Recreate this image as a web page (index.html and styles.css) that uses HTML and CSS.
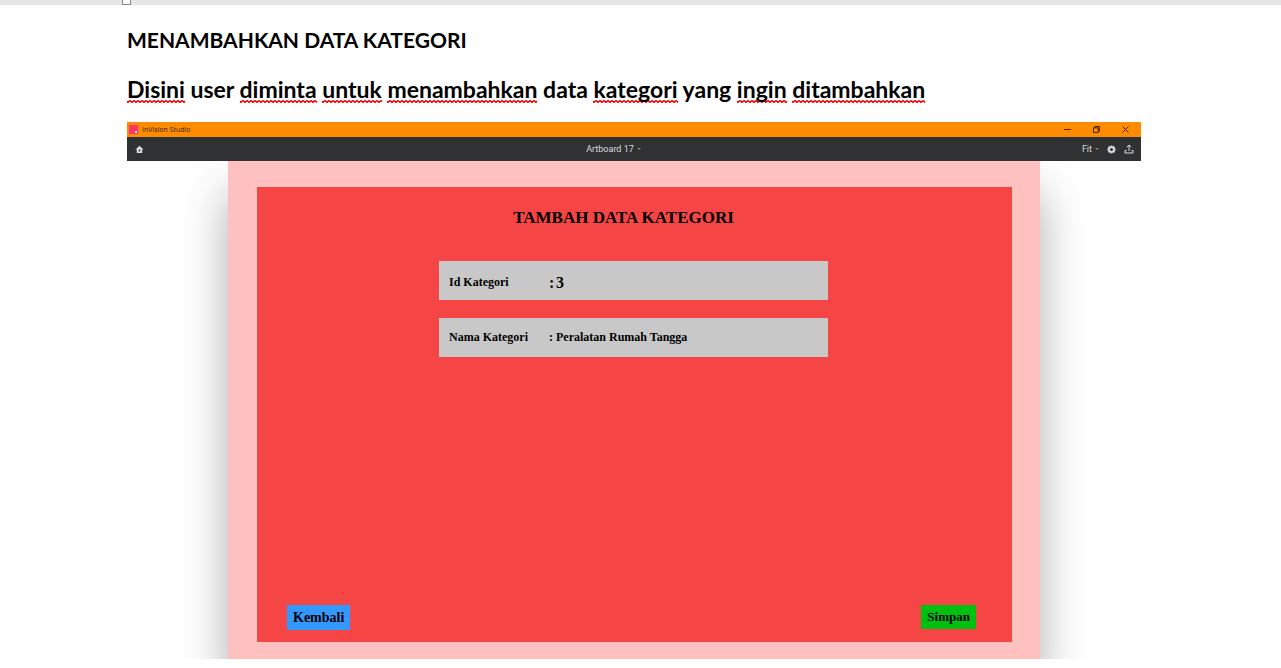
FILE: index.html
```html
<!DOCTYPE html>
<html lang="id">
<head>
<meta charset="utf-8">
<meta name="viewport" content="width=device-width, initial-scale=1">
<title>Menambahkan Data Kategori</title>
<link rel="stylesheet" href="styles.css">
</head>
<body>
<div class="ruler"><span class="ruler-mark"></span></div>
<main class="document">
  <h1 class="heading">MENAMBAHKAN DATA KATEGORI</h1>
  <p class="intro"><span class="typo">Disini</span> user <span class="typo">diminta</span> <span class="typo">untuk</span> <span class="typo">menambahkan</span> data <span class="typo">kategori</span> yang <span class="typo">ingin</span> <span class="typo">ditambahkan</span></p>

  <section class="studio">
    <header class="titlebar">
      <svg class="app-logo" viewBox="0 0 9 9" aria-hidden="true"><rect width="9" height="9" fill="#ff3366"/><rect x="6" y="6" width="2" height="2" fill="#fff"/></svg>
      <span class="app-name">InVision Studio</span>
      <div class="window-controls">
        <button class="icon-button" type="button" aria-label="Minimize"><svg viewBox="0 0 9 9"><path d="M1 4.500h7"/></svg></button>
        <button class="icon-button" type="button" aria-label="Restore"><svg viewBox="0 0 9 9"><path d="M1.500 2.800h4.700v4.700H1.500zM2.800 2.800V1.500h4.700v4.700H6.200"/></svg></button>
        <button class="icon-button" type="button" aria-label="Close"><svg viewBox="0 0 9 9"><path d="M1.500 1.500l6 6M7.500 1.500l-6 6"/></svg></button>
      </div>
    </header>
    <nav class="toolbar">
      <button class="tool home" type="button" aria-label="Home"><svg viewBox="0 0 9 9"><path fill="currentColor" fill-rule="evenodd" d="M4.500 .7L8.500 4.500H7.200V8H1.800V4.500H.5zM3.800 4.500V6.500H5.200V4.500z"/></svg></button>
      <button class="tool artboard-name" type="button">Artboard 17 <span class="caret"></span></button>
      <div class="tools">
        <button class="tool" type="button">Fit <span class="caret"></span></button>
        <button class="tool gear" type="button" aria-label="Settings"><svg viewBox="0 0 9 9"><circle cx="4.500" cy="4.500" r="2.400" fill="none" stroke="currentColor" stroke-width="1.800"/><path fill="none" stroke="currentColor" stroke-width="1.800" d="M4.500 .4v1.300M4.500 7.300v1.300M.4 4.500h1.300M7.300 4.500h1.300M1.600 1.600l.9.9M6.500 6.500l.9.9M7.400 1.600l-.9.9M2.500 6.500l-.9.9"/></svg></button>
        <button class="tool share" type="button" aria-label="Share"><svg viewBox="0 0 10 10"><path fill="none" stroke="currentColor" d="M5 7V1.200M2.800 3.200L5 1l2.200 2.200M2.500 6.500H1v2.500h8V6.500H7.500"/></svg></button>
      </div>
    </nav>
    <div class="canvas">
      <div class="artboard">
        <form class="panel">
          <h2 class="panel-title">TAMBAH DATA KATEGORI</h2>
          <div class="fields">
            <div class="field field-id"><label for="id-kategori">Id Kategori</label><span class="colon">:</span><input id="id-kategori" type="text" value="3"></div>
            <div class="field"><label for="nama-kategori">Nama Kategori</label><span class="colon">:</span><input id="nama-kategori" type="text" value="Peralatan Rumah Tangga"></div>
          </div>
          <div class="actions">
            <button class="action back" type="button">Kembali</button>
            <button class="action save" type="button">Simpan</button>
          </div>
        </form>
      </div>
    </div>
  </section>
</main>
</body>
</html>
```
FILE: styles.css
```css
* { box-sizing: border-box; }
body { margin: 0; background: #fff; color: #000; }
button, input { font: inherit; color: inherit; border: 0; padding: 0; margin: 0; background: none; }

.ruler { display: flex; height: 5px; padding-left: 122px; background: #e6e6e6; }
.ruler-mark { width: 9px; height: 5px; background: #fff; border: 1px solid #888; border-top: 0; }

.document { padding: 20px 140px 9px 127px; font-family: Lato, sans-serif; }
.heading, .intro { margin: 0 0 19px; font-size: 21px; line-height: 30px; font-weight: 700; }
.intro { margin-bottom: 18px; font-size: 23px; }
.typo { background: url("data:image/svg+xml,%3Csvg xmlns='http://www.w3.org/2000/svg' width='4' height='3'%3E%3Cpath d='M-1 .5L1 2.500L3 .5L5 2.500' fill='none' stroke='%23f00' stroke-width='1.400'/%3E%3C/svg%3E") left bottom repeat-x; }

.titlebar { display: flex; align-items: center; height: 15px; padding: 0 11px 0 2px; background: #ff8c00; color: #331a00; font: 7px/15px "Open Sans", sans-serif; }
.app-logo { width: 9px; height: 9px; margin-right: 4px; }
.window-controls { display: flex; gap: 20px; margin-left: auto; }
.icon-button { display: flex; width: 9px; height: 9px; }
.icon-button svg { width: 9px; height: 9px; fill: none; stroke: #4a2500; stroke-width: 1; }

.toolbar { display: grid; grid-template-columns: 1fr auto 1fr; align-items: center; height: 24px; padding: 0 7px 0 8px; background: #2f3133; color: #dcdcdc; font: 9px/24px Roboto, sans-serif; }
.tool { display: flex; align-items: center; gap: 3px; }
.tool svg { width: 9px; height: 9px; }
.artboard-name { margin-right: 42px; }
.tools { display: flex; justify-content: flex-end; gap: 8px; }
.tool.share svg { width: 10px; height: 10px; }
.caret { border: 2px solid transparent; border-top-color: #888; border-bottom: 0; }

.canvas { padding: 0 101px; overflow: hidden; }
.artboard { padding: 26px 28px 17px 29px; background: #ffc0c0; box-shadow: 0 32px 44px rgba(0, 0, 0, 0.32); }
.panel { display: flex; flex-direction: column; min-height: 455px; background: #f64545; font-family: "Liberation Serif", serif; font-weight: 700; }
.panel-title { margin: 19px 22px 31px 0; font-size: 17px; line-height: 24px; text-align: center; }
.fields { display: grid; gap: 18px; margin: 0 184px 0 182px; }
.field { display: flex; align-items: center; height: 39px; padding: 0 10px; background: #c8c8c8; font-size: 12px; }
.field label { width: 100px; }
.colon { width: 7px; }
.field input { flex: 1; min-width: 0; }
.field-id { padding-top: 4px; }
.field-id .colon, .field-id input { font-size: 16px; }
.actions { display: flex; justify-content: space-between; align-items: flex-start; margin: auto 36px 12px 30px; }
.action { height: 25px; padding: 0 6px; font-size: 14px; }
.back { background: #3399ff; }
.save { height: 24px; background: #00c010; font-size: 13px; }
```
